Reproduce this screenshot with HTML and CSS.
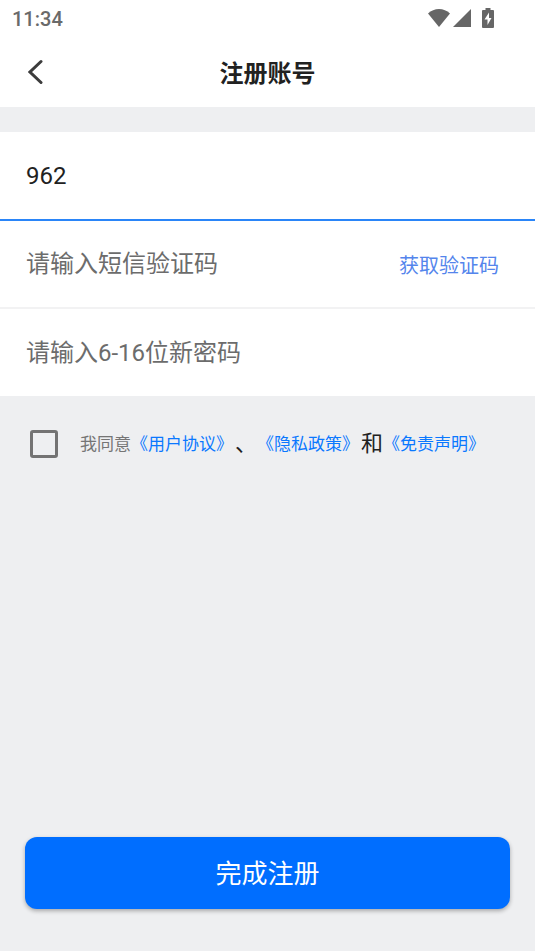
FILE: index.html
```html
<!DOCTYPE html>
<html lang="zh-CN">
<head>
  <meta charset="utf-8">
  <meta name="viewport" content="width=device-width, initial-scale=1">
  <title>注册账号</title>
  <link rel="stylesheet" href="styles.css">
</head>
<body>
  <div class="status-bar">
    <span class="status-time">11:34</span>
    <div class="status-icons">
      <svg width="24" height="20" viewBox="0 0 24 20" aria-hidden="true"><path d="M12 19 1 5.500C4 2.500 8 1 12 1s8 1.500 11 4.500z"/></svg>
      <svg width="18" height="20" viewBox="0 0 18 20" aria-hidden="true"><path d="M18 1v18H0z"/></svg>
      <svg class="battery" width="12" height="20" viewBox="0 0 12 20" aria-hidden="true"><path fill-rule="evenodd" d="M3.500 0h5v2H11q1 0 1 1v16q0 1-1 1H1q-1 0-1-1V3q0-1 1-1h2.500zM7 4.500 2.500 11.500H5.500V17L9.500 10H7z"/></svg>
    </div>
  </div>

  <header class="app-bar">
    <button class="back" type="button" aria-label="返回">
      <svg width="16" height="26" viewBox="0 0 16 26" aria-hidden="true"><path d="M13 2.500 2 13l11 10.500"/></svg>
    </button>
    <h1 class="title">注册账号</h1>
  </header>

  <form class="register">
    <div class="fields">
      <div class="field field-active">
        <input class="field-input" type="text" inputmode="tel" value="962" aria-label="手机号">
      </div>
      <div class="field">
        <input class="field-input" type="text" placeholder="请输入短信验证码" aria-label="短信验证码">
        <button class="get-code" type="button">获取验证码</button>
      </div>
      <div class="field">
        <input class="field-input" type="password" placeholder="请输入6-16位新密码" aria-label="新密码">
      </div>
    </div>

    <div class="agreement">
      <input class="agree-box" type="checkbox" id="agree">
      <div class="agree-text">
        <label for="agree">我同意</label><a href="#terms">《用户协议》</a>
        <span class="joiner">、</span>
        <a href="#privacy">《隐私政策》</a>
        <span class="joiner">和</span><a href="#disclaimer">《免责声明》</a>
      </div>
    </div>

    <button class="submit" type="submit">完成注册</button>
  </form>
</body>
</html>
```

FILE: styles.css
```css
* {
  box-sizing: border-box;
}

body {
  display: flex;
  flex-direction: column;
  min-height: 100vh;
  margin: 0;
  background: #eeeff1;
  color: #212121;
  font-family: Roboto, "Noto Sans CJK SC", sans-serif;
}

button,
input {
  font-family: inherit;
}

button {
  padding: 0;
  border: 0;
  background: none;
  cursor: pointer;
}

.status-bar {
  display: flex;
  align-items: center;
  justify-content: space-between;
  height: 37px;
  padding: 0 41px 0 12px;
  background: #fff;
  color: #6a6a6a;
}

.status-time {
  font-size: 20px;
  font-weight: 500;
}

.status-icons {
  display: flex;
  align-items: center;
  gap: 2px;
  padding-bottom: 2px;
  fill: #666;
}

.battery {
  margin-left: 9px;
}

.app-bar {
  display: grid;
  grid-template-columns: 72px 1fr 72px;
  align-items: center;
  height: 70px;
  background: #fff;
}

.back {
  display: flex;
  align-items: center;
  justify-content: center;
  height: 70px;
}

.back svg {
  fill: none;
  stroke: #3c3c3c;
  stroke-width: 3;
  stroke-linecap: round;
}

.title {
  margin: 0;
  padding-top: 3px;
  font-size: 24px;
  font-weight: 700;
  line-height: 36px;
  text-align: center;
}

.register {
  display: flex;
  flex: 1;
  flex-direction: column;
  padding-top: 25px;
}

.field {
  display: flex;
  align-items: center;
  height: 88px;
  padding: 0 36px 0 26px;
  border-bottom: 2px solid #f2f2f3;
  background: #fff;
}

.field-active {
  height: 89px;
  border-bottom-color: #2a85f8;
}

.field:last-child {
  height: 87px;
  border-bottom: 0;
}

.field-input {
  flex: 1;
  min-width: 0;
  height: 48px;
  padding: 0;
  border: 0;
  outline: 0;
  background: none;
  color: #212121;
  font-size: 24px;
}

.field-input::placeholder {
  color: #6c6c6c;
  opacity: 1;
}

.get-code {
  color: #5485ec;
  font-size: 20px;
}

.agreement {
  display: flex;
  align-items: center;
  gap: 22px;
  padding: 32px 26px 0 30px;
}

.agree-box {
  flex: none;
  width: 28px;
  height: 28px;
  margin: 0;
  border: 3px solid #737373;
  border-radius: 3px;
  appearance: none;
}

.agree-box:checked {
  border-color: #006eff;
  background: #006eff;
}

.agree-text {
  display: flex;
  align-items: center;
  color: #757575;
  font-size: 17px;
  line-height: 32px;
  text-spacing-trim: space-all;
}

.agree-text a {
  color: #0a78ff;
  text-decoration: none;
}

.joiner {
  margin-left: 2px;
  color: #212121;
  font-size: 22px;
}

.submit {
  height: 72px;
  margin: auto 25px 42px;
  padding-bottom: 4px;
  border-radius: 12px;
  background: #006eff;
  box-shadow: 0 2px 4px rgba(0, 0, 0, 0.3);
  color: #fff;
  font-size: 26px;
}
```
